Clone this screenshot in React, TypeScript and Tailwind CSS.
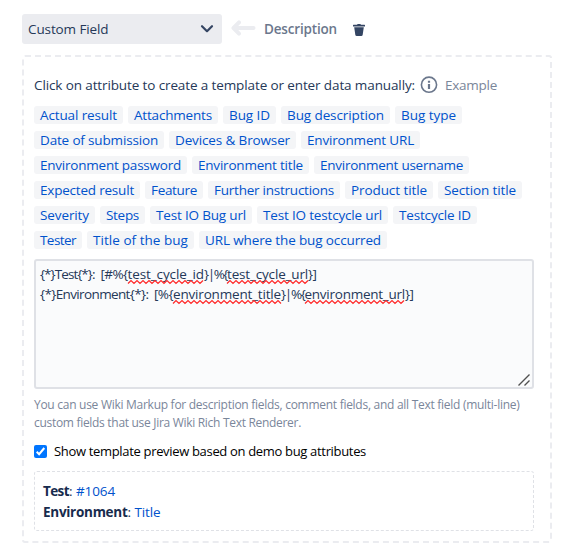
import { useLayoutEffect, useRef, useState } from "react";
import type { ReactNode } from "react";

type FitProps = { text: string; width: number; className?: string; children?: ReactNode };

// A run of text whose tracking is adjusted so that it fills the given width.
function Fit({ text, width, className = "", children }: FitProps) {
  const ref = useRef<HTMLSpanElement>(null);
  const [spacing, setSpacing] = useState(0);
  useLayoutEffect(() => {
    const el = ref.current;
    if (!el) return;
    el.style.letterSpacing = "0px";
    const natural = el.getBoundingClientRect().width;
    const next = (width - natural) / text.length;
    el.style.letterSpacing = `${next}px`;
    setSpacing(next);
  }, [text, width]);
  return (
    <span className={`relative inline-block whitespace-pre ${className}`}>
      <span ref={ref} className="inline-block whitespace-pre" style={{ letterSpacing: spacing }}>
        {text}
      </span>
      {children}
    </span>
  );
}

function Misspelled({ text, width }: { text: string; width: number }) {
  const points: string[] = [];
  for (let x = 0; x <= width; x += 3) points.push(`${x},${(x / 3) % 2 ? 0.6 : 3.4}`);
  return (
    <Fit text={text} width={width}>
      <svg className="absolute left-0 top-[16px] h-1 w-full overflow-visible" aria-hidden="true">
        <polyline points={points.join(" ")} fill="none" stroke="#ff2a2a" strokeWidth="1.3" />
      </svg>
    </Fit>
  );
}

const rows: [string, number][][] = [
  [["Actual result", 89], ["Attachments", 90], ["Bug ID", 53], ["Bug description", 109], ["Bug type", 67]],
  [["Date of submission", 130], ["Devices & Browser", 127], ["Environment URL", 119]],
  [["Environment password", 153], ["Environment title", 117], ["Environment username", 155]],
  [["Expected result", 106], ["Feature", 58], ["Further instructions", 132], ["Product title", 88], ["Section title", 84]],
  [["Severity", 61], ["Steps", 45], ["Test IO Bug url", 102], ["Test IO testcycle url", 131], ["Testcycle ID", 84]],
  [["Tester", 48], ["Title of the bug", 107], ["URL where the bug occurred", 188]],
];

export default function App() {
  return (
    <main className="h-[552px] w-[582px] bg-white pl-[22px] pt-[14px] font-['Open_Sans','Noto_Sans',sans-serif] text-[13.5px] leading-5 text-[#253858]">
      <header className="flex h-[30px] items-center">
        <button className="flex h-[30px] w-[200px] items-center justify-between rounded-[3px] bg-[#ebecf0] pl-1.5 pr-2">
          <Fit text="Custom Field" width={80.5} />
          <svg width="14" height="10" viewBox="0 0 14 10" fill="none" stroke="#344563" strokeWidth="2.2" strokeLinecap="round" strokeLinejoin="round">
            <path d="M2 2.2 7 7.2 12 2.2" />
          </svg>
        </button>
        <svg className="ml-[9px]" width="25" height="18" viewBox="0 0 25 18" fill="none" stroke="#ebecf0" strokeWidth="4" strokeLinecap="round" strokeLinejoin="round">
          <path d="M8 2.4 2.5 8 8 13.6M3 8H22.5" />
        </svg>
        <Fit text="Description" width={73} className="ml-[8px] font-semibold text-[#6b778c]" />
        <svg className="ml-4 mt-[2px]" width="12" height="12" viewBox="0 0 12 12" fill="#344563">
          <path d="M0 1.2Q0 .8 .4 .8H4Q4.2 0 5 0H7Q7.8 0 8 .8H11.6Q12 .8 12 1.2V2.4H0ZM1.2 3.2H10.8L9.7 10.8Q9.5 12 8.3 12H3.7Q2.5 12 2.3 10.8Z" />
        </svg>
      </header>

      <section className="mt-[11px] h-[488px] w-[530px] rounded-[3px] border-2 border-dashed border-[#ebecf0] pl-2.5 pt-[18px]">
        <div className="flex h-5 items-center">
          <Fit text="Click on attribute to create a template or enter data manually:" width={381} />
          <svg className="ml-[5px]" width="18" height="18" viewBox="0 0 18 18" fill="none" stroke="#6b778c">
            <circle cx="9" cy="8.7" r="7.6" strokeWidth="1.6" />
            <path d="M9 8v5M9 4.8v2" strokeWidth="2.2" />
          </svg>
          <Fit text="Example" width={52} className="ml-[7px] text-[#7a869a]" />
        </div>

        <div className="mt-[11px] flex flex-col gap-[7px] text-[#0052cc]">
          {rows.map((row) => (
            <div key={row[0][0]} className="flex h-[18px] gap-[5px]">
              {row.map(([label, width]) => (
                <a key={label} className="flex h-[18px] shrink-0 items-center rounded-[3px] bg-[#f4f5f7] px-1.5" style={{ width }}>
                  <Fit text={label} width={width - 12} />
                </a>
              ))}
            </div>
          ))}
        </div>

        <div className="relative mt-[10px] h-[130px] w-[500px] rounded-[3px] border-2 border-[#dfe1e6] bg-[#fafbfc] px-1 pt-[3px]">
          <div className="flex h-5">
            <Fit text="{*}Test{*}" width={52} />
            <Fit text=": " width={8.5} />
            <Fit text="[#%{" width={27} />
            <Misspelled text="test_cycle_id" width={76.5} />
            <Fit text="}|%{" width={23} />
            <Misspelled text="test_cycle_url" width={81} />
            <Fit text="}]" width={8.5} />
          </div>
          <div className="flex h-5">
            <Fit text="{*}Environment{*}" width={105.5} />
            <Fit text=": " width={8.5} />
            <Fit text="[%{" width={19} />
            <Misspelled text="environment_title" width={108} />
            <Fit text="}|%{" width={23.5} />
            <Misspelled text="environment_url" width={100.5} />
            <Fit text="}]" width={8.5} />
          </div>
          <svg className="absolute bottom-px right-[2px]" width="12" height="12" viewBox="0 0 12 12" stroke="#505050" strokeWidth="1.4">
            <path d="M.5 11.5 11.5.5M6.5 11.5l5-5" />
          </svg>
        </div>

        <div className="mt-[7px] flex flex-col text-[12px] leading-[18px] text-[#7a869a]">
          <Fit text="You can use Wiki Markup for description fields, comment fields, and all Text field (multi-line)" width={485.5} />
          <Fit text="custom fields that use Jira Wiki Rich Text Renderer." width={267} />
        </div>

        <label className="mt-[9px] flex h-5 items-center text-[13px] text-black">
          <span className="flex size-[13px] items-center justify-center rounded-[2px] bg-[#0075ff]">
            <svg width="13" height="13" viewBox="0 0 13 13" fill="none" stroke="white" strokeWidth="2">
              <path d="M2.7 6.8 5.1 9.2 10.3 3" />
            </svg>
          </span>
          <Fit text="Show template preview based on demo bug attributes" width={312} className="ml-[7px]" />
        </label>

        <div className="mt-[10px] h-[60px] w-[500px] rounded-[3px] border border-dashed border-[#dfe1e6] pl-2 pt-[9px]">
          <div className="flex h-[21px]">
            <Fit text="Test" width={26} className="font-bold text-[#172b4d]" />
            <Fit text=": " width={7} />
            <Fit text="#1064" width={39} className="text-[#0052cc]" />
          </div>
          <div className="flex h-[21px]">
            <Fit text="Environment" width={84.5} className="font-bold text-[#172b4d]" />
            <Fit text=": " width={7} />
            <Fit text="Title" width={26} className="text-[#0052cc]" />
          </div>
        </div>
      </section>
    </main>
  );
}
